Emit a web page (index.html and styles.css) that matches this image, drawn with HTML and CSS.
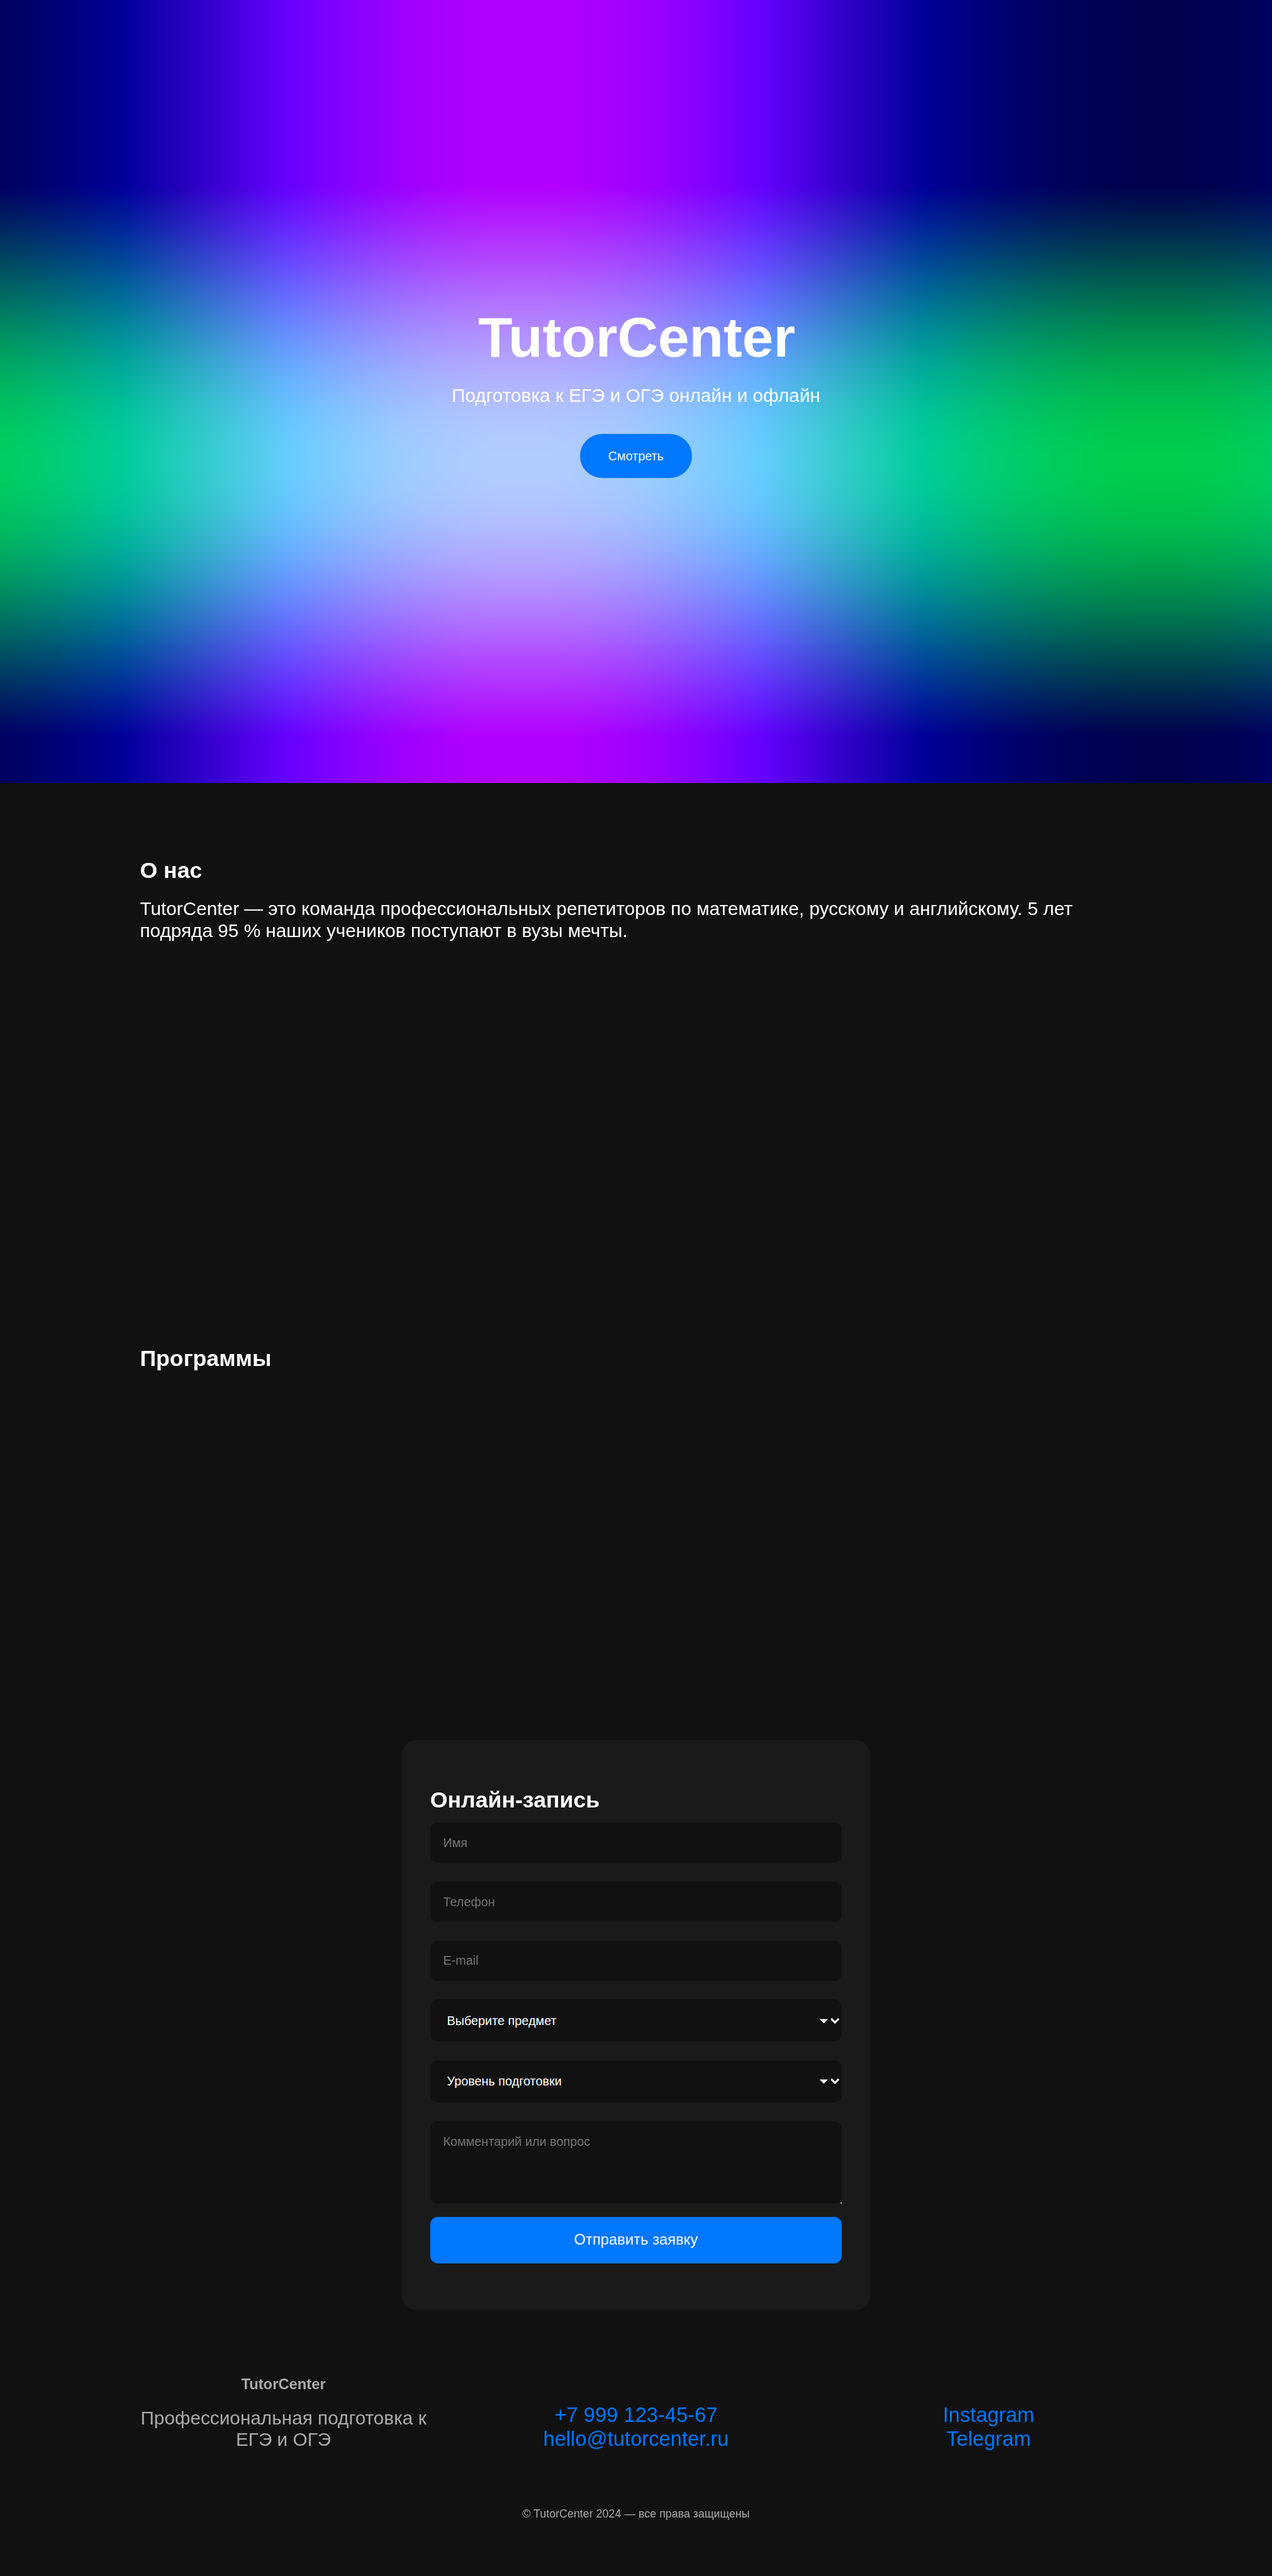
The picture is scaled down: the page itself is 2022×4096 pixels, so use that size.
FILE: index.html
```html
<!DOCTYPE html>
<html lang="ru">
<head>
<meta charset="utf-8">
<title>TutorCenter</title>
<link rel="stylesheet" href="styles.css">
</head>
<body>
<header class="hero">
  <canvas class="hero-canvas" width="2022" height="1245"></canvas>
  <h1 class="hero-title">TutorCenter</h1>
  <p class="hero-text">Подготовка к ЕГЭ и ОГЭ онлайн и офлайн</p>
  <button class="hero-button" type="button">Смотреть</button>
</header>
<section class="section about">
  <h2 class="heading">О нас</h2>
  <p class="text">TutorCenter — это команда профессиональных репетиторов по математике, русскому и английскому. 5 лет подряда 95 % наших учеников поступают в вузы мечты.</p>
</section>
<section class="section programs">
  <h2 class="heading">Программы</h2>
</section>
<form class="card">
  <h2 class="heading">Онлайн-запись</h2>
  <div class="fields">
    <input class="field" type="text" placeholder="Имя">
    <input class="field" type="tel" placeholder="Телефон">
    <input class="field" type="email" placeholder="E-mail">
    <div class="field select">
      <span>Выберите предмет</span>
      <svg class="arrows" viewBox="0 0 44 14"><path d="M1 3.5h18l-9 9z"/><path class="chevron" d="M26 2.500l8 8 8-8"/></svg>
    </div>
    <div class="field select">
      <span>Уровень подготовки</span>
      <svg class="arrows" viewBox="0 0 44 14"><path d="M1 3.5h18l-9 9z"/><path class="chevron" d="M26 2.500l8 8 8-8"/></svg>
    </div>
    <div class="area">
      <textarea class="field comment" placeholder="Комментарий или вопрос"></textarea>
      <span class="grip"></span>
    </div>
  </div>
  <button class="submit" type="button">Отправить заявку</button>
</form>
<footer class="footer">
  <div class="columns">
    <div class="column">
      <h4 class="brand">TutorCenter</h4>
      <p class="text">Профессиональная подготовка к ЕГЭ и ОГЭ</p>
    </div>
    <div class="column links"><a>+7 999 123-45-67</a><a>hello@tutorcenter.ru</a></div>
    <div class="column links"><a>Instagram</a><a>Telegram</a></div>
  </div>
  <p class="copyright">© TutorCenter 2024 — все права защищены</p>
</footer>
<script src="script.js"></script>
</body>
</html>
```
FILE: styles.css
```css
/* 1rem = 10 design units */
html { font-size: 14.8786px; }
* { box-sizing: border-box; margin: 0; padding: 0; }
body {
  background: #111;
  color: #fff;
  font-family: "Liberation Sans", Arial, sans-serif;
  font-size: 1.6rem;
}
.hero {
  position: relative;
  height: 83.7rem;
  display: flex;
  flex-direction: column;
  align-items: center;
  justify-content: center;
  text-align: center;
}
.hero-canvas {
  position: absolute;
  inset: 0;
  width: 100%;
  height: 100%;
  z-index: -1;
}
.hero-title { font-size: 6rem; line-height: 6.9rem; margin-bottom: 1.6rem; padding-left: .15rem; }
.hero-text { font-size: 2rem; line-height: 2.3rem; margin-bottom: 3rem; }
.hero-button {
  height: 4.7rem;
  width: 11.9rem;
  border: 0;
  border-radius: 3rem;
  background: #07f;
  color: #fff;
  font: 1.3333rem/1.5rem "Liberation Sans", Arial, sans-serif;
}
.section { width: 110rem; margin: 0 auto; padding: 8rem 2rem; }
.about { height: 52.1rem; }
.programs { height: 50.2rem; }
.heading { font-size: 2.4rem; line-height: 2.7rem; margin-bottom: 1.6rem; }
.text { font-size: 2rem; line-height: 2.3rem; }
.card {
  width: 50rem;
  height: 60.9rem;
  margin: 0 auto;
  padding: 5rem 3rem;
  border-radius: 1.5rem;
  background: #1a1a1a;
}
.card .heading { margin-bottom: 1.1rem; }
.fields { display: flex; flex-direction: column; gap: 2rem; }
.field {
  display: block;
  width: 100%;
  height: 4.3rem;
  padding: 1.4rem;
  border: 0;
  border-radius: .8rem;
  background: #111;
  color: #fff;
  font: 1.3333rem/1.5rem "Liberation Sans", Arial, sans-serif;
}
.field::placeholder { color: #757575; }
.select {
  height: 4.5rem;
  padding: 0 .1rem 0 1.8rem;
  display: flex;
  align-items: center;
  justify-content: space-between;
}
.arrows { width: 2.2rem; height: .7rem; margin-right: .15rem; fill: #fff; overflow: visible; }
.chevron { fill: none; stroke: #fff; stroke-width: 4; }
.area { position: relative; }
.comment { height: 8.8rem; resize: none; }
.grip {
  position: absolute;
  right: 0;
  bottom: 0;
  width: 2px;
  height: 2px;
  background: #aaa;
}
.submit {
  display: block;
  width: 100%;
  height: 5rem;
  margin-top: 1.4rem;
  border: 0;
  border-radius: .8rem;
  background: #07f;
  color: #fff;
  font: 1.6rem/1.8rem "Liberation Sans", Arial, sans-serif;
}
.footer { color: #aaa; text-align: center; padding-top: 7rem; }
.columns {
  width: 106rem;
  margin: 0 auto;
  display: grid;
  grid-template-columns: repeat(3, 1fr);
  gap: 7rem;
}
.brand { font-size: 1.6rem; line-height: 1.8rem; margin-bottom: 1.6rem; }
.links {
  display: flex;
  flex-direction: column;
  padding-top: 2.9rem;
  color: #07f;
  font-size: 2.2rem;
  line-height: 2.6rem;
}
.copyright { font-size: 1.2rem; line-height: 1.4rem; margin-top: 6rem; }
```
FILE: script.js
```js
// Two cosine waves: red and blue vary along x, green along y.
const canvas = document.querySelector('.hero-canvas');
const ctx = canvas.getContext('2d');
const { width, height } = canvas;
const image = ctx.createImageData(width, height);
const wave = (t, peak) => 0.5 + 0.5 * Math.cos(2 * Math.PI * (t - peak));

for (let y = 0; y < height; y++) {
  const green = (wave(y / height, 0.589) - 0.2) * 255;
  for (let x = 0; x < width; x++) {
    const v = wave(x / width, 0.4114);
    const i = (y * width + x) * 4;
    image.data[i] = (v - 0.3) * 255;
    image.data[i + 1] = green;
    image.data[i + 2] = (v + 0.3) * 255;
    image.data[i + 3] = 255;
  }
}
ctx.putImageData(image, 0, 0);
```
